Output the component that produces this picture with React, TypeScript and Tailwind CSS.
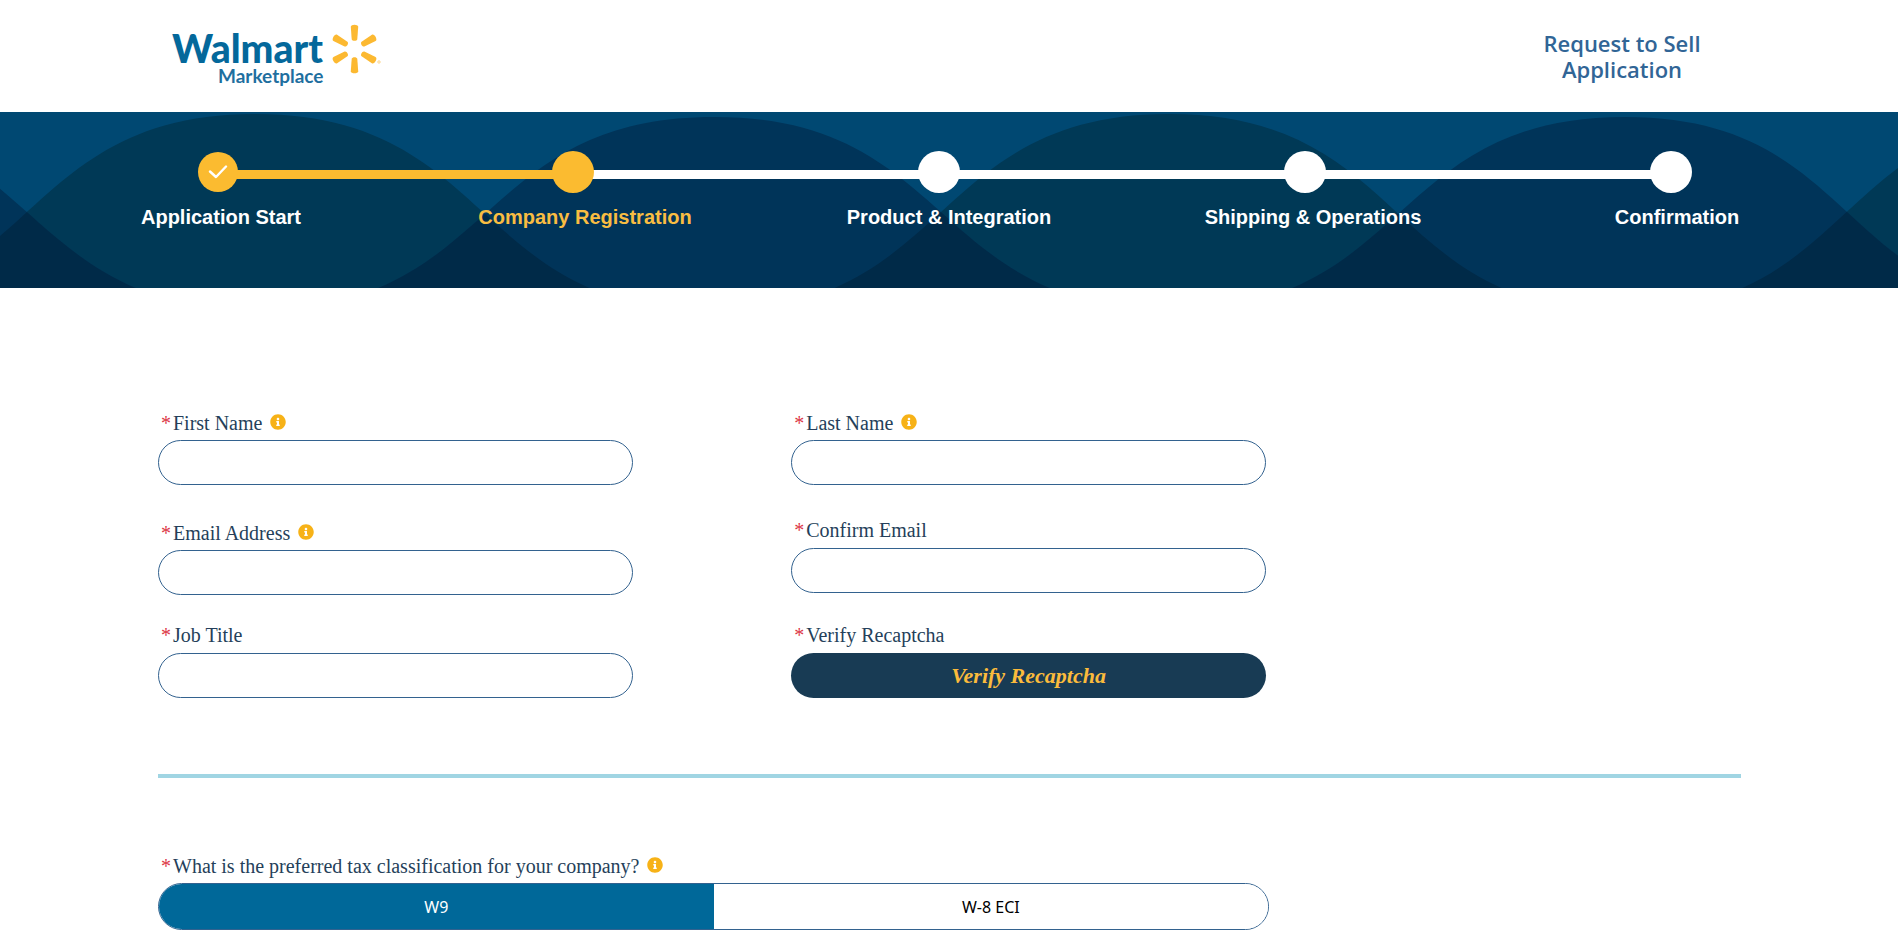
import { useId, useState } from "react";
import type { ReactNode } from "react";
import { FaInfoCircle } from "react-icons/fa";
import clsx from "clsx";

const STEPS = [
  "Application Start",
  "Company Registration",
  "Product & Integration",
  "Shipping & Operations",
  "Confirmation",
];

const CURRENT_STEP = 1;

const TAX_OPTIONS = ["W9", "W-8 ECI"];

const BACK_WAVE =
  "M-202 199C38 199 15 2 255 2S472 199 712 199S929 2 1169 2S1386 199 1622 199S1833 2 2073 2V210H-202Z";
const FRONT_WAVE =
  "M-200 5C40 5 17 198 257 198S474 5 714 5S931 198 1171 198S1387 5 1625 5S1834 198 2074 198V210H-200Z";

function Logo() {
  return (
    <svg
      viewBox="0 0 220 72"
      className="h-[72px] w-[220px]"
      role="img"
      aria-label="Walmart Marketplace"
    >
      <text
        x="3"
        y="43"
        fontSize="39"
        fontWeight="900"
        fill="#04689b"
        className="font-[Lato,sans-serif]"
      >
        Walmart
      </text>
      <text
        x="49"
        y="63"
        fontSize="19"
        fontWeight="700"
        fill="#1f6f9f"
        className="font-[Lato,sans-serif]"
      >
        Marketplace
      </text>
      {/* Spark */}
      <g transform="translate(185.5 29)" fill="#fcb931">
        {[0, 60, 120, 180, 240, 300].map((angle) => (
          <path
            key={angle}
            transform={`rotate(${angle})`}
            d="M-3.7 -22.2C-3.7 -25 3.7 -25 3.7 -22.2L2.8 -9.8C2.4 -7.6 -2.4 -7.6 -2.8 -9.8Z"
          />
        ))}
      </g>
      <circle cx="210" cy="42" r="1.2" fill="none" stroke="#fcd58a" strokeWidth="1" />
    </svg>
  );
}

function Waves() {
  return (
    <svg
      viewBox="0 0 1898 176"
      preserveAspectRatio="none"
      className="absolute inset-0 h-full w-full"
      aria-hidden="true"
    >
      <clipPath id="wave-front">
        <path d={FRONT_WAVE} />
      </clipPath>
      <rect width="1898" height="176" fill="#004872" />
      <path d={BACK_WAVE} fill="#003956" />
      <path d={FRONT_WAVE} fill="#003459" />
      {/* Where both waves overlap */}
      <path d={BACK_WAVE} fill="#002a48" clipPath="url(#wave-front)" />
    </svg>
  );
}

function Stepper() {
  return (
    <nav aria-label="Application progress" className="relative h-44 overflow-hidden">
      <Waves />
      <div className="relative pt-[39px]">
        <div className="flex items-center pr-[206px] pl-[198px]">
          {STEPS.map((step, i) => (
            <div key={step} className={clsx("flex items-center", i > 0 && "flex-1", i === 1 && "-ml-2.5")}>
              {i > 0 && (
                <div
                  className={clsx(
                    "-mx-1 mt-[5px] h-[9px] flex-1",
                    i <= CURRENT_STEP ? "bg-[#fbbb30]" : "bg-white"
                  )}
                />
              )}
              <div
                className={clsx(
                  "z-10 flex shrink-0 items-center justify-center rounded-full",
                  i < CURRENT_STEP ? "size-10" : "size-[42px]",
                  i <= CURRENT_STEP ? "bg-[#fbbb30]" : "bg-white"
                )}
              >
                {i < CURRENT_STEP && (
                  <svg viewBox="0 0 20 14" className="h-3.5 w-5" fill="none">
                    <path
                      d="M2 6.5L8 12L18 1.5"
                      stroke="white"
                      strokeWidth="2.4"
                      strokeLinecap="round"
                      strokeLinejoin="round"
                    />
                  </svg>
                )}
              </div>
            </div>
          ))}
        </div>
        <ol className="mt-3 grid grid-cols-5 px-[39px] text-center font-['Liberation_Sans',Arial,sans-serif] text-xl leading-6 font-bold text-white">
          {STEPS.map((step, i) => (
            <li key={step} className={clsx(i === CURRENT_STEP && "text-[#f9bd42]")}>
              {step}
            </li>
          ))}
        </ol>
      </div>
    </nav>
  );
}

function InfoButton() {
  return (
    <button type="button" aria-label="More information" className="-mt-[3px] ml-2">
      <FaInfoCircle className="size-4 text-[#f7b217]" />
    </button>
  );
}

interface LabelProps {
  htmlFor?: string;
  id?: string;
  info?: boolean;
  children: ReactNode;
}

function FieldLabel({ htmlFor, id, info, children }: LabelProps) {
  return (
    <div className={clsx("flex items-center pl-[3px] text-xl leading-6", info ? "pt-[3px] pb-[5px]" : "pb-1.5")}>
      <label htmlFor={htmlFor} id={id} className="text-[#253f5a]">
        <span className="mr-0.5 text-[#dc3545]">*</span>
        {children}
      </label>
      {info && <InfoButton />}
    </div>
  );
}

function TextField({ label, info, type = "text" }: { label: string; info?: boolean; type?: string }) {
  const id = useId();
  return (
    <div>
      <FieldLabel htmlFor={id} info={info}>
        {label}
      </FieldLabel>
      <input
        id={id}
        type={type}
        required
        className="block h-[45px] w-full rounded-full border border-[#33628f] bg-white px-5 text-xl text-[#253f5a] shadow-none outline-none"
      />
    </div>
  );
}

export default function App() {
  const [taxForm, setTaxForm] = useState("W9");

  return (
    <div className="min-h-screen bg-white font-['Liberation_Serif','Times_New_Roman',serif]">
      <header className="flex h-28 items-center justify-between pr-[184px] pl-[169px]">
        <Logo />
        <h1 className="w-[184px] text-center font-['Open_Sans','Noto_Sans',sans-serif] text-[22px] leading-[26px] font-semibold text-[#316596]">
          Request to Sell Application
        </h1>
      </header>

      <Stepper />

      <form className="pt-[120px] pr-[157px] pl-[158px]" onSubmit={(e) => e.preventDefault()}>
        <div className="grid grid-cols-[30%_30%] gap-x-[10%]">
          <TextField label="First Name" info />
          <TextField label="Last Name" info />
        </div>
        <div className="mt-[33px] grid grid-cols-[30%_30%] gap-x-[10%]">
          <TextField label="Email Address" type="email" info />
          <TextField label="Confirm Email" type="email" />
        </div>
        <div className="mt-7 grid grid-cols-[30%_30%] gap-x-[10%]">
          <TextField label="Job Title" />
          <div>
            <FieldLabel htmlFor="verify-recaptcha">Verify Recaptcha</FieldLabel>
            <button
              id="verify-recaptcha"
              type="button"
              className="block h-[45px] w-full rounded-full bg-[#183b54] text-[22px] font-bold text-[#fbbb3c] italic"
            >
              Verify Recaptcha
            </button>
          </div>
        </div>

        <hr className="mt-[76px] border-t-4 border-[#a0d5e3]" />

        <div className="mt-[73px]">
          <FieldLabel id="tax-label" info>
            What is the preferred tax classification for your company?
          </FieldLabel>
          <div
            role="group"
            aria-labelledby="tax-label"
            className="flex h-[47px] w-[calc(70%+3px)] overflow-hidden rounded-full border border-[#33628f] font-['Noto_Sans','Open_Sans',sans-serif] text-base"
          >
            {TAX_OPTIONS.map((option) => (
              <button
                key={option}
                type="button"
                aria-pressed={taxForm === option}
                onClick={() => setTaxForm(option)}
                className={clsx(
                  "flex-1",
                  taxForm === option ? "bg-[#006899] text-white" : "bg-white text-black"
                )}
              >
                {option}
              </button>
            ))}
          </div>
        </div>
      </form>
    </div>
  );
}
